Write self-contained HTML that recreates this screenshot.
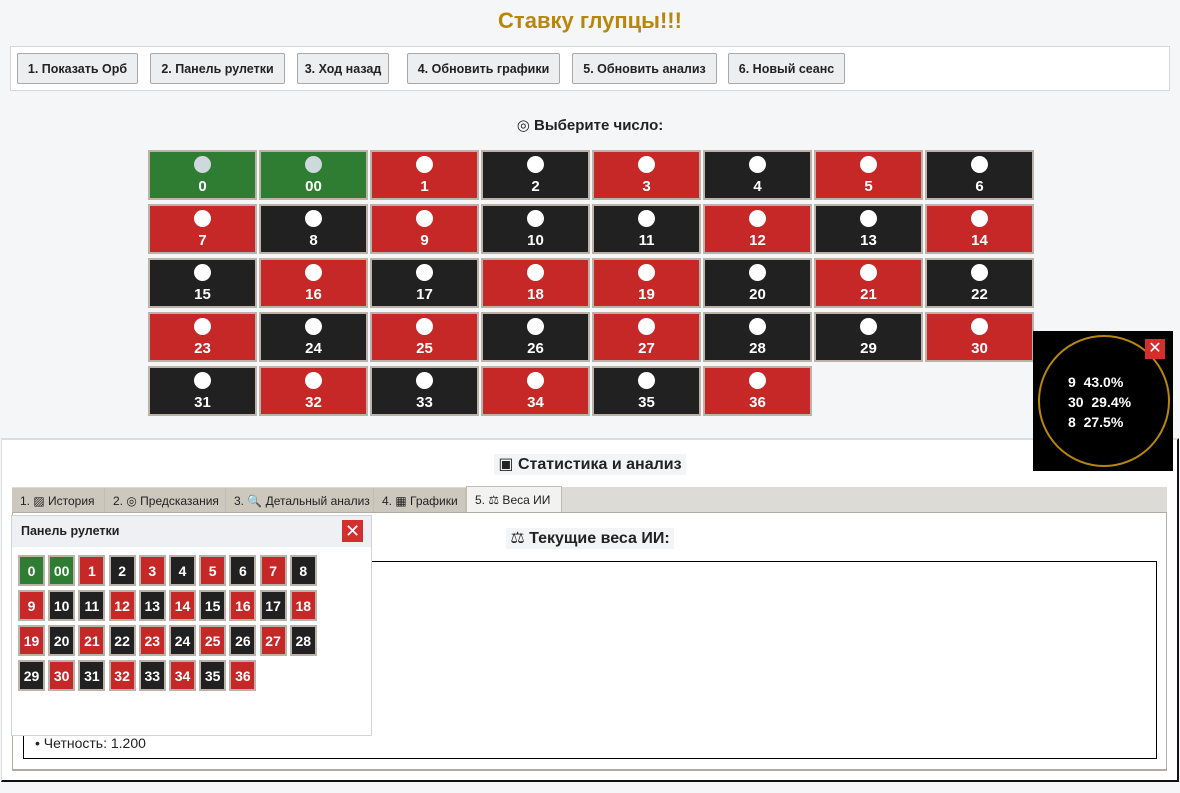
<!DOCTYPE html>
<html><head><meta charset="utf-8"><style>
*{box-sizing:border-box;margin:0;padding:0}
body{width:1180px;height:793px;background:#f5f6f8;font-family:"Liberation Sans","DejaVu Sans",sans-serif;position:relative;overflow:hidden;color:#222}
.abs{position:absolute}
h1{position:absolute;left:0;width:1180px;top:8px;text-align:center;color:#b8860b;font-size:22px;font-weight:bold}
.bar{left:10px;top:46px;width:1160px;height:45px;background:#fff;border:1px solid #d4d6da}
.btn{position:absolute;top:53px;height:31px;background:#eceef0;border:1px solid #a8a8a8;border-radius:2px;font-size:12.5px;font-weight:bold;display:flex;align-items:center;justify-content:center;color:#222}
.cell{position:absolute;width:109px;height:50px;border:2px solid #bbb3aa;color:#fff;font-weight:bold;font-size:15px;text-align:center;line-height:16px}
.cell i{display:block;width:17px;height:17px;border-radius:50%;background:#fff;margin:4px auto 6px}
.r{background:#c62828}.b{background:#212121}.g{background:#2e7d32}
.sb{position:absolute;width:27px;height:31px;border:2px solid #bbb3aa;color:#fff;font-weight:bold;font-size:14px;display:flex;align-items:center;justify-content:center}
.tab{position:absolute;top:488px;height:25px;font-size:12px;display:flex;align-items:center;padding-left:8px;border-right:1px solid #c0bdb4;color:#222;background:#cdc8bd}
</style></head><body>
<h1>Ставку глупцы!!!</h1>
<div class="abs bar"></div>
<div class="btn" style="left:17px;width:121px">1. Показать Орб</div>
<div class="btn" style="left:150px;width:135px">2. Панель рулетки</div>
<div class="btn" style="left:297px;width:92px">3. Ход назад</div>
<div class="btn" style="left:407px;width:153px">4. Обновить графики</div>
<div class="btn" style="left:572px;width:145px">5. Обновить анализ</div>
<div class="btn" style="left:728px;width:117px">6. Новый сеанс</div>
<div class="abs" style="left:0;width:1180px;top:116px;text-align:center;font-weight:bold;font-size:15px">◎ Выберите число:</div>
<div id="grid"></div>
<div class="abs" style="left:1px;top:438px;width:1178px;height:344px;background:#fff;border-top:2px solid #dcdde0;border-left:1px solid #dcdde0;border-right:2px solid #111;border-bottom:2px solid #111"></div>
<div class="abs" style="left:0;width:1180px;top:454px;text-align:center;font-weight:bold;font-size:16px"><span style="background:#f3f4f6;padding:2px 4px">▣ Статистика и анализ</span></div>
<div class="abs" style="left:12px;top:487px;width:1155px;height:26px;background:#dcdbd5"></div>
<div class="tab" style="left:12px;width:93px">1. ▨ История</div>
<div class="tab" style="left:105px;width:121px">2. ◎ Предсказания</div>
<div class="tab" style="left:226px;width:148px">3. 🔍 Детальный анализ</div>
<div class="tab" style="left:374px;width:92px">4. ▦ Графики</div>
<div class="tab" style="left:466px;width:96px;background:#f2f2f0;top:486px;height:27px;border:1px solid #c0bdb4;border-bottom:none">5. ⚖ Веса ИИ</div>
<div class="abs" style="left:12px;top:512px;width:1155px;height:259px;background:#fff;border:1px solid #b0aca4;border-bottom:2px solid #b0aca4"></div>
<div class="abs" style="left:0;width:1180px;top:528px;text-align:center;font-weight:bold;font-size:16px"><span style="background:#f3f4f6;padding:2px 4px">⚖ Текущие веса ИИ:</span></div>
<div class="abs" style="left:23px;top:561px;width:1134px;height:198px;border:1px solid #000"></div>
<div class="abs" style="left:35px;top:735px;font-size:14px;color:#222">• Четность: 1.200</div>
<div class="abs" style="left:11px;top:515px;width:361px;height:221px;background:#fff;border:1px solid #d0d3d8"></div>
<div class="abs" style="left:12px;top:516px;width:359px;height:31px;background:#eef0f3"></div>
<div class="abs" style="left:21px;top:524px;font-weight:bold;font-size:12.5px">Панель рулетки</div>
<div class="abs" style="left:342px;top:520px;width:21px;height:22px;background:#d32f2f;color:#fff;font-weight:bold;font-size:18px;text-align:center;line-height:22px">✕</div>
<div id="sp"></div>
<div class="abs" style="left:1033px;top:331px;width:140px;height:140px;background:#000"></div>
<div class="abs" style="left:1038px;top:335px;width:132px;height:132px;border:2px solid #b8860b;border-radius:50%"></div>
<div class="abs" style="left:1145px;top:339px;width:20px;height:20px;background:#d32f2f;color:#fff;font-weight:bold;font-size:16px;text-align:center;line-height:20px">✕</div>
<div class="abs" style="left:1068px;top:372px;color:#fff;font-weight:bold;font-size:14px;line-height:20px;white-space:pre">9  43.0%
30  29.4%
8  27.5%</div>
<script>
var red=[1,3,5,7,9,12,14,16,18,19,21,23,25,27,30,32,34,36];
var nums=["0","00"];for(var i=1;i<=36;i++)nums.push(""+i);
function cls(n){if(n=="0"||n=="00")return"g";return red.indexOf(+n)>=0?"r":"b";}
var h="";
nums.forEach(function(n,k){var c=k%8,r=Math.floor(k/8);
h+='<div class="cell '+cls(n)+'" style="left:'+(148+c*111)+'px;top:'+(150+r*54)+'px"><i'+(cls(n)=="g"?' style="background:#cfd8dc"':'')+'></i>'+n+'</div>';});
document.getElementById("grid").innerHTML=h;
h="";
nums.forEach(function(n,k){var c=k%10,r=Math.floor(k/10);
h+='<div class="sb '+cls(n)+'" style="left:'+(18+c*30.2)+'px;top:'+(555+r*35)+'px">'+n+'</div>';});
document.getElementById("sp").innerHTML=h;
</script>
</body></html>
